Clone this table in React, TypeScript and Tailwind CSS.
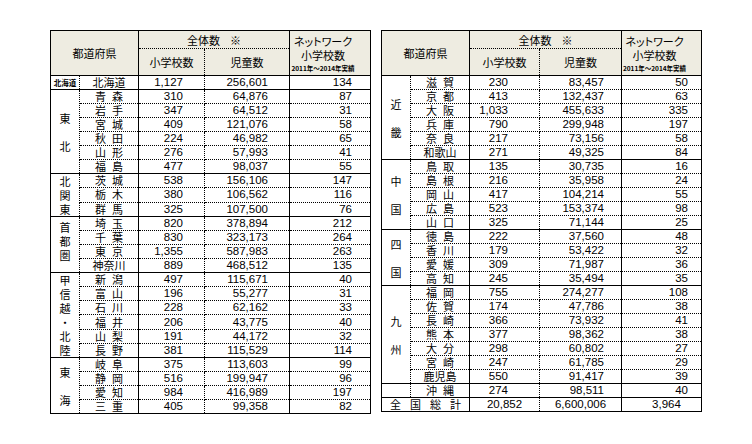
import React from "react";

type Row = [string, string, string, string];
type Group = { label: string[]; small?: boolean; rows: Row[]; labelPad?: string };

const leftGroups: Group[] = [
  { label: ["北海道"], small: true, rows: [["北海道", "1,127", "256,601", "134"]] },
  {
    label: ["東", "", "北"],
    rows: [
      ["青森", "310", "64,876", "87"],
      ["岩手", "347", "64,512", "31"],
      ["宮城", "409", "121,076", "58"],
      ["秋田", "224", "46,982", "65"],
      ["山形", "276", "57,993", "41"],
      ["福島", "477", "98,037", "55"],
    ],
  },
  {
    label: ["北", "関", "東"],
    rows: [
      ["茨城", "538", "156,106", "147"],
      ["栃木", "380", "106,562", "116"],
      ["群馬", "325", "107,500", "76"],
    ],
  },
  {
    label: ["首", "都", "圏"],
    labelPad: "pb-[8px]",
    rows: [
      ["埼玉", "820", "378,894", "212"],
      ["千葉", "830", "323,173", "264"],
      ["東京", "1,355", "587,983", "263"],
      ["神奈川", "889", "468,512", "135"],
    ],
  },
  {
    label: ["甲", "信", "越", "・", "北", "陸"],
    rows: [
      ["新潟", "497", "115,671", "40"],
      ["富山", "196", "55,277", "31"],
      ["石川", "228", "62,162", "33"],
      ["福井", "206", "43,775", "40"],
      ["山梨", "191", "44,172", "32"],
      ["長野", "381", "115,529", "114"],
    ],
  },
  {
    label: ["東", "", "海"],
    rows: [
      ["岐阜", "375", "113,603", "99"],
      ["静岡", "516", "199,947", "96"],
      ["愛知", "984", "416,989", "197"],
      ["三重", "405", "99,358", "82"],
    ],
  },
];

const rightGroups: Group[] = [
  {
    label: ["近", "", "畿"],
    rows: [
      ["滋賀", "230", "83,457", "50"],
      ["京都", "413", "132,437", "63"],
      ["大阪", "1,033", "455,633", "335"],
      ["兵庫", "790", "299,948", "197"],
      ["奈良", "217", "73,156", "58"],
      ["和歌山", "271", "49,325", "84"],
    ],
  },
  {
    label: ["中", "", "国"],
    rows: [
      ["鳥取", "135", "30,735", "16"],
      ["島根", "216", "35,958", "24"],
      ["岡山", "417", "104,214", "55"],
      ["広島", "523", "153,374", "98"],
      ["山口", "325", "71,144", "25"],
    ],
  },
  {
    label: ["四", "", "国"],
    rows: [
      ["徳島", "222", "37,560", "48"],
      ["香川", "179", "53,422", "32"],
      ["愛媛", "309", "71,987", "36"],
      ["高知", "245", "35,494", "35"],
    ],
  },
  {
    label: ["九", "", "州"],
    rows: [
      ["福岡", "755", "274,277", "108"],
      ["佐賀", "174", "47,786", "38"],
      ["長崎", "366", "73,932", "41"],
      ["熊本", "377", "98,362", "38"],
      ["大分", "298", "60,802", "27"],
      ["宮崎", "247", "61,785", "29"],
      ["鹿児島", "550", "91,417", "39"],
    ],
  },
  { label: [], rows: [["沖縄", "274", "98,511", "40"]] },
];

const CJK = "font-['Noto_Sans_CJK_JP',sans-serif]";
const NUM = "font-['Liberation_Sans',Arial,sans-serif]";
const HEAD = "bg-[#EEECE1] p-0 font-normal text-[11px] whitespace-nowrap";

function Pref({ name }: { name: string }) {
  if (name.length === 2) {
    return (
      <div className="flex justify-center gap-[6px]">
        <span>{name[0]}</span>
        <span>{name[1]}</span>
      </div>
    );
  }
  return <div className="text-center">{name}</div>;
}

type Pads = { s: string; c: string; n: string };

function Header() {
  return (
    <thead>
      <tr className="h-[18px]">
        <th rowSpan={2} colSpan={2} className={`border border-solid border-black ${HEAD} ${CJK}`}>
          都道府県
        </th>
        <th
          colSpan={2}
          className={`h-[18px] border border-solid border-black [border-bottom-style:dotted] ${HEAD} leading-[14px] ${CJK}`}
        >
          <div className="flex justify-center gap-[10px] pt-[1px]">
            <span>全体数</span>
            <span>※</span>
          </div>
        </th>
        <th rowSpan={2} className={`border border-solid border-black ${HEAD} ${CJK}`}>
          <div className="flex flex-col items-center pr-[14px] [font-feature-settings:'palt']">
            <span className="text-[11px] leading-[14px]">ネットワーク</span>
            <span className="text-[11px] leading-[15px]">小学校数</span>
            <span className="text-[6.5px] leading-[10px] font-bold">2011年～2014年実績</span>
          </div>
        </th>
      </tr>
      <tr className="h-[27px]">
        <th
          className={`h-[27px] border border-solid border-black [border-right-style:dotted] [border-top-style:dotted] ${HEAD} ${CJK}`}
        >
          小学校数
        </th>
        <th
          className={`h-[27px] border border-solid border-black [border-left-style:dotted] [border-top-style:dotted] ${HEAD} ${CJK}`}
        >
          児童数
        </th>
      </tr>
    </thead>
  );
}

function Body({ groups, pads, total }: { groups: Group[]; pads: Pads; total?: boolean }) {
  return (
    <tbody>
      {groups.map((g, gi) =>
        g.rows.map((r, ri) => {
          const top = ri === 0 ? "[border-top-style:solid]" : "";
          const base = `border border-dotted border-black p-0 h-[14px] leading-[13px] whitespace-nowrap overflow-hidden ${top}`;
          return (
            <tr key={`${gi}-${ri}`} className="h-[14px]">
              {ri === 0 && (
                <td rowSpan={g.rows.length} className={`${base} align-middle`}>
                  {g.small ? (
                    <div className={`text-center text-[7.5px] font-bold ${CJK}`}>{g.label[0]}</div>
                  ) : (
                    <div className={`flex flex-col items-center text-[11px] ${CJK} ${g.labelPad ?? ""}`}>
                      {g.label.map((c, i) => (
                        <span key={i} className="h-[14px] leading-[14px]">
                          {c}
                        </span>
                      ))}
                    </div>
                  )}
                </td>
              )}
              <td className={`${base} text-[11px] ${CJK}`}>
                <Pref name={r[0]} />
              </td>
              <td className={`${base} [border-left-style:solid] text-right text-[11.5px] ${NUM} ${pads.s}`}>{r[1]}</td>
              <td className={`${base} text-right text-[11.5px] ${NUM} ${pads.c}`}>{r[2]}</td>
              <td className={`${base} [border-left-style:solid] text-right text-[11.5px] ${NUM} ${pads.n}`}>{r[3]}</td>
            </tr>
          );
        })
      )}
      {total && (
        <tr className="h-[14px]">
          <td colSpan={2} className={`border border-solid border-black p-0 h-[14px] leading-[13px] text-[11px] ${CJK}`}>
            <div className="flex justify-center gap-[9px]">
              <span>全</span>
              <span>国</span>
              <span>総</span>
              <span>計</span>
            </div>
          </td>
          <td
            className={`border border-solid border-black [border-right-style:dotted] p-0 leading-[13px] text-center text-[11.5px] ${NUM}`}
          >
            20,852
          </td>
          <td
            className={`border border-solid border-black [border-left-style:dotted] p-0 leading-[13px] text-center text-[11.5px] ${NUM}`}
          >
            6,600,006
          </td>
          <td className={`border border-solid border-black p-0 leading-[13px] text-center text-[11.5px] pl-[10px] ${NUM}`}>
            3,964
          </td>
        </tr>
      )}
    </tbody>
  );
}

function DataTable({
  groups,
  widths,
  pads,
  total,
}: {
  groups: Group[];
  widths: string[];
  pads: Pads;
  total?: boolean;
}) {
  return (
    <table className="border-collapse table-fixed w-[320px] border border-solid border-black text-black">
      <colgroup>
        {widths.map((w, i) => (
          <col key={i} className={w} />
        ))}
      </colgroup>
      <Header />
      <Body groups={groups} pads={pads} total={total} />
    </table>
  );
}

export default function App() {
  return (
    <div className="w-[752px] h-[444px] bg-white overflow-hidden">
      <div className="flex items-start gap-[10px] pl-[50px] pt-[30px]">
        <DataTable
          groups={leftGroups}
          widths={["w-[29px]", "w-[59px]", "w-[66px]", "w-[85px]", "w-[81px]"]}
          pads={{ s: "pr-[21px]", c: "pr-[21px]", n: "pr-[18px]" }}
        />
        <DataTable
          groups={rightGroups}
          widths={["w-[29px]", "w-[59px]", "w-[70px]", "w-[82px]", "w-[80px]"]}
          pads={{ s: "pr-[31px]", c: "pr-[17px]", n: "pr-[13px]" }}
          total
        />
      </div>
    </div>
  );
}
